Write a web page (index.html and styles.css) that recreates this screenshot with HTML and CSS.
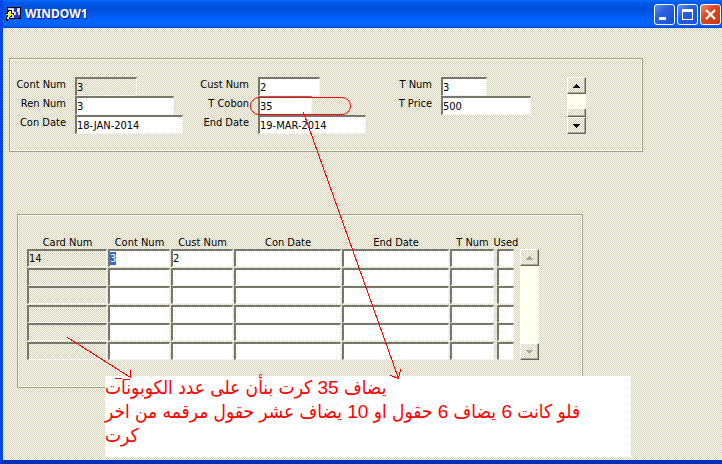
FILE: index.html
```html
<!DOCTYPE html>
<html lang="en">
<head>
  <meta charset="UTF-8" />
  <meta name="viewport" content="width=device-width, initial-scale=1.0"/>
  <title>WINDOW1</title>
  <link rel="stylesheet" href="styles.css">
</head>
<body>
  <div class="window">
    <!-- Title bar -->
    <header class="title-bar">
      <svg class="app-icon" viewBox="0 0 16 16" shape-rendering="crispEdges">
        <rect x="2" y="1" width="14" height="12" fill="#000"/>
        <rect x="3" y="2" width="12" height="10" fill="#c8ccf8"/>
        <path d="M9 2h3v3h1v4h2v3H9V9h2V6H9z" fill="#2a3cc8"/>
        <path d="M5 3h3v3h2v3H7V8H5z" fill="#fff"/>
        <rect x="12" y="3" width="2" height="3" fill="#fff"/>
        <path d="M3 4h4v3h2v2H7v2H5v2H3v2H1v-4h2V9H0V7h3z" fill="#000"/>
        <path d="M4 5h2v3h2v1H6v1H5v1H4v2H2v-2h1V9H1V8h2V6h1z" fill="#ff0"/>
      </svg>
      <h1>WINDOW1</h1>
      <div class="window-buttons">
        <button type="button" aria-label="Minimize">
          <svg viewBox="0 0 17 17"><rect x="3" y="11" width="7" height="3" fill="#fff"/></svg>
        </button>
        <button type="button" aria-label="Maximize">
          <svg viewBox="0 0 17 17"><path d="M3 3h11v11H3zM4 6v7h9V6z" fill="#fff" fill-rule="evenodd"/></svg>
        </button>
        <button type="button" class="close" aria-label="Close">
          <svg viewBox="0 0 17 17"><path d="M4 4l9 9M13 4l-9 9" stroke="#fff" stroke-width="2.4"/></svg>
        </button>
      </div>
    </header>

    <main class="content">
      <!-- Contract block -->
      <form class="panel contract">
        <div class="group">
          <label for="contNum">Cont Num</label>
          <input type="text" id="contNum" class="field w-62 locked" value="3" readonly>
          <label for="renNum">Ren Num</label>
          <input type="text" id="renNum" class="field w-99" value="3">
          <label for="conDate">Con Date</label>
          <input type="text" id="conDate" class="field w-108" value="18-JAN-2014">
        </div>
        <div class="group">
          <label for="custNum">Cust Num</label>
          <input type="text" id="custNum" class="field w-62" value="2">
          <label for="tCobon">T Cobon</label>
          <input type="text" id="tCobon" class="field w-54" value="35">
          <label for="endDate">End Date</label>
          <input type="text" id="endDate" class="field w-108" value="19-MAR-2014">
        </div>
        <div class="group">
          <label for="tNum">T Num</label>
          <input type="text" id="tNum" class="field w-46" value="3">
          <label for="tPrice">T Price</label>
          <input type="text" id="tPrice" class="field w-90" value="500">
        </div>
        <div class="scroll">
          <button type="button" aria-label="Previous record"><svg viewBox="0 0 7 4"><path d="M3 0h1v1h1v1h1v1h1v1H0V3h1V2h1V1h1z"/></svg></button>
          <div class="track"><div class="thumb"></div></div>
          <button type="button" aria-label="Next record"><svg viewBox="0 0 7 4"><path d="M0 0h7v1H6v1H5v1H4v1H3V3H2V2H1V1H0z"/></svg></button>
        </div>
      </form>

      <!-- Cards block -->
      <form class="panel cards">
        <table>
          <thead>
            <tr>
              <th class="c-card">Card Num</th>
              <th class="c-num">Cont Num</th>
              <th class="c-num">Cust Num</th>
              <th class="c-date">Con Date</th>
              <th class="c-date">End Date</th>
              <th class="c-tnum">T Num</th>
              <th class="c-used"><span>Used</span></th>
            </tr>
          </thead>
          <tbody>
            <tr>
              <td><input type="text" class="field locked" aria-label="Card Num" value="14" readonly></td>
              <td><input type="text" class="field" id="current" aria-label="Cont Num" value="3"></td>
              <td><input type="text" class="field" aria-label="Cust Num" value="2"></td>
              <td><input type="text" class="field" aria-label="Con Date"></td>
              <td><input type="text" class="field" aria-label="End Date"></td>
              <td><input type="text" class="field" aria-label="T Num"></td>
              <td class="c-used"><input type="text" class="field" aria-label="Used"></td>
            </tr>
            <tr>
              <td><input type="text" class="field locked" aria-label="Card Num" readonly></td>
              <td><input type="text" class="field" aria-label="Cont Num"></td>
              <td><input type="text" class="field" aria-label="Cust Num"></td>
              <td><input type="text" class="field" aria-label="Con Date"></td>
              <td><input type="text" class="field" aria-label="End Date"></td>
              <td><input type="text" class="field" aria-label="T Num"></td>
              <td class="c-used"><input type="text" class="field" aria-label="Used"></td>
            </tr>
            <tr>
              <td><input type="text" class="field locked" aria-label="Card Num" readonly></td>
              <td><input type="text" class="field" aria-label="Cont Num"></td>
              <td><input type="text" class="field" aria-label="Cust Num"></td>
              <td><input type="text" class="field" aria-label="Con Date"></td>
              <td><input type="text" class="field" aria-label="End Date"></td>
              <td><input type="text" class="field" aria-label="T Num"></td>
              <td class="c-used"><input type="text" class="field" aria-label="Used"></td>
            </tr>
            <tr>
              <td><input type="text" class="field locked" aria-label="Card Num" readonly></td>
              <td><input type="text" class="field" aria-label="Cont Num"></td>
              <td><input type="text" class="field" aria-label="Cust Num"></td>
              <td><input type="text" class="field" aria-label="Con Date"></td>
              <td><input type="text" class="field" aria-label="End Date"></td>
              <td><input type="text" class="field" aria-label="T Num"></td>
              <td class="c-used"><input type="text" class="field" aria-label="Used"></td>
            </tr>
            <tr>
              <td><input type="text" class="field locked" aria-label="Card Num" readonly></td>
              <td><input type="text" class="field" aria-label="Cont Num"></td>
              <td><input type="text" class="field" aria-label="Cust Num"></td>
              <td><input type="text" class="field" aria-label="Con Date"></td>
              <td><input type="text" class="field" aria-label="End Date"></td>
              <td><input type="text" class="field" aria-label="T Num"></td>
              <td class="c-used"><input type="text" class="field" aria-label="Used"></td>
            </tr>
            <tr>
              <td><input type="text" class="field locked" aria-label="Card Num" readonly></td>
              <td><input type="text" class="field" aria-label="Cont Num"></td>
              <td><input type="text" class="field" aria-label="Cust Num"></td>
              <td><input type="text" class="field" aria-label="Con Date"></td>
              <td><input type="text" class="field" aria-label="End Date"></td>
              <td><input type="text" class="field" aria-label="T Num"></td>
              <td class="c-used"><input type="text" class="field" aria-label="Used"></td>
            </tr>
          </tbody>
        </table>
        <div class="scroll">
          <button type="button" disabled aria-label="Scroll up"><svg viewBox="0 0 7 4"><path d="M3 0h1v1h1v1h1v1h1v1H0V3h1V2h1V1h1z"/></svg></button>
          <div class="track"></div>
          <button type="button" disabled aria-label="Scroll down"><svg viewBox="0 0 7 4"><path d="M0 0h7v1H6v1H5v1H4v1H3V3H2V2H1V1H0z"/></svg></button>
        </div>
      </form>
    </main>

    <!-- Annotations over the form -->
    <div class="note" lang="ar" dir="rtl">
      <p>يضاف 35 كرت بنأن على عدد الكوبونات</p>
      <p>فلو كانت 6 يضاف 6 حقول او 10 يضاف عشر حقول مرقمه من اخر</p>
      <p>كرت</p>
    </div>
    <svg class="marks" width="722" height="464" viewBox="0 0 722 464">
      <rect x="250.5" y="97.5" width="100" height="17" rx="8.5"/>
      <g shape-rendering="crispEdges">
        <path d="M303.5 112.5L398.5 378.5M390.5 375.5L398.5 378.5L400.5 369.5"/>
        <path d="M67.5 337.5L130.5 377.5V369.5M114.5 378.5H121.5M122.5 379.5H129.5"/>
      </g>
    </svg>
  </div>

  <script>
    const current = document.getElementById('current');
    current.focus();
    current.select();
  </script>
</body>
</html>
```
FILE: styles.css
```css
* {
  margin: 0;
  padding: 0;
  box-sizing: border-box;
}

:root {
  --dither: url("data:image/svg+xml,%3Csvg xmlns='http://www.w3.org/2000/svg' width='4' height='4' shape-rendering='crispEdges'%3E%3Crect width='4' height='4' fill='%23fff'/%3E%3Cpath d='M1 0h1v1h-1zM3 0h1v1h-1zM0 1h1v1h-1zM2 1h1v1h-1zM1 2h1v1h-1zM3 2h1v1h-1zM0 3h1v1h-1zM2 3h1v1h-1z' fill='%23d4d0c8'/%3E%3Cpath d='M0 0h1v1h-1zM3 1h1v1h-1zM2 2h1v1h-1zM1 3h1v1h-1z' fill='%23ffc'/%3E%3C/svg%3E") 0 0 / 4px 4px;
}

body {
  font-family: "DejaVu Sans Condensed", Tahoma, sans-serif;
  font-size: 11px;
  line-height: 13px;
  color: #000;
}

.window {
  position: relative;
  min-height: 100vh;
  display: flex;
  flex-direction: column;
  background: var(--dither);
  border-left: 3px solid #0047e8;
  border-bottom: 4px solid #0030b8;
  overflow: hidden;
}

.title-bar {
  height: 28px;
  margin-left: -3px;
  padding: 0 1px 0 5px;
  display: flex;
  align-items: center;
  gap: 4px;
  background: linear-gradient(#0a6cff 0, #0058e8 3px, #0050dc 10px, #0062ff 20px, #0066ff 25px, #0044cc 28px);
}

.app-icon {
  width: 16px;
  height: 16px;
}

.title-bar h1 {
  flex: 1;
  font-family: "Noto Sans", sans-serif;
  font-size: 12px;
  line-height: 18px;
  font-weight: bold;
  color: #fff;
  text-shadow: 1px 1px 0 #0a1883;
}

.window-buttons {
  display: flex;
  gap: 2px;
}

.window-buttons button {
  width: 21px;
  height: 21px;
  padding: 1px;
  border: 1px solid #fff;
  border-radius: 3px;
  background: linear-gradient(135deg, #6690f0, #2860dc 40%, #1850d0);
}

.window-buttons .close {
  background: linear-gradient(135deg, #f08c70, #dc4820 40%, #c83810);
}

.window-buttons svg {
  display: block;
  width: 17px;
  height: 17px;
}

.content {
  flex: 1;
  padding: 30px 6px;
}

.panel {
  display: flex;
  width: fit-content;
  border: 1px solid #a4a48c;
  outline: 1px solid #f8f8e8;
  outline-offset: -2px;
}

.contract {
  padding: 18px 56px 17px 2px;
  gap: 12px;
}

.cards {
  margin: 62px 0 0 8px;
  padding: 21px 43px 27px 9px;
  gap: 5px;
}

.group {
  display: grid;
  grid-template-columns: 54px auto;
  grid-auto-rows: 19px;
  column-gap: 9px;
  justify-items: start;
}

.group label {
  justify-self: end;
  padding-top: 1px;
  white-space: nowrap;
}

.field {
  display: block;
  height: 19px;
  padding: 1px 0 0;
  border: 2px solid;
  border-color: #77776a #f4f4ee #f4f4ee #77776a;
  border-right-width: 1px;
  border-bottom-width: 1px;
  background: #fff;
  font: inherit;
  color: #000;
  outline: none;
}

.field.locked {
  background: var(--dither);
}

.field::selection {
  background: #316ac5;
  color: #fff;
}

.w-46 { width: 46px; }
.w-54 { width: 54px; }
.w-62 { width: 62px; }
.w-90 { width: 90px; }
.w-99 { width: 99px; }
.w-108 { width: 108px; }

/* scroll bars */
.scroll {
  width: 19px;
  display: flex;
  flex-direction: column;
}

.contract .scroll {
  margin-left: 24px;
}

.cards .scroll {
  margin-top: 13px;
}

.scroll button,
.thumb {
  height: 17px;
  border: 1px solid;
  border-color: #fff #66665a #66665a #fff;
  box-shadow: inset -1px -1px #aaa899;
  background: var(--dither);
}

.scroll button {
  display: flex;
  align-items: center;
  justify-content: center;
}

.scroll svg {
  width: 7px;
  height: 4px;
  shape-rendering: crispEdges;
}

.scroll button:disabled svg {
  fill: #aaa899;
}

.track {
  flex: 1;
  display: flex;
  flex-direction: column;
  justify-content: flex-end;
  background: #fffff0;
}

.thumb {
  height: 8px;
  border-top: 0;
}

/* cards table */
table {
  border-collapse: separate;
  border-spacing: 0;
  table-layout: fixed;
  width: 488px;
}

th {
  height: 13px;
  font-weight: normal;
  white-space: nowrap;
}

td {
  height: 18px;
  padding-right: 1px;
}

tr:nth-child(even) td {
  height: 19px;
}

td .field {
  width: 100%;
  height: 18px;
  padding: 0 0 1px;
}

.c-card { width: 81px; }
.c-num { width: 63px; }
.c-date { width: 108px; }
.c-tnum { width: 45px; }

.c-used {
  width: 20px;
  padding-left: 2px;
}

th.c-used span {
  display: flex;
  justify-content: center;
}

/* red notes */
.note {
  position: absolute;
  left: 102px;
  top: 376px;
  width: 526px;
  height: 81px;
  background: #fff;
  color: #f00;
  font-family: "Liberation Sans", "DejaVu Sans Condensed", sans-serif;
  font-size: 19px;
  line-height: 24px;
  text-align: left;
  white-space: nowrap;
}

.marks {
  position: absolute;
  left: -3px;
  top: 0;
  fill: none;
  stroke: #f00;
  pointer-events: none;
}
```
